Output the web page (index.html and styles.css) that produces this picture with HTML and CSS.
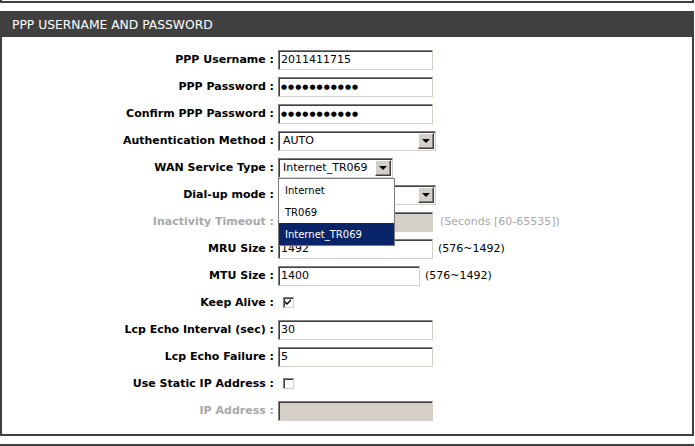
FILE: index.html
```html
<!DOCTYPE html>
<html lang="en">
<head>
<meta charset="UTF-8" />
<title>PPP Username and Password</title>
<link rel="stylesheet" href="styles.css">
</head>
<body>

<div class="prev-box"></div>

<div class="section">
  <h2 class="section-title">PPP USERNAME AND PASSWORD</h2>
  <div class="form">
    <div class="row">
      <div class="label">PPP Username :</div>
      <div class="field"><div class="input">2011411715</div></div>
    </div>
    <div class="row">
      <div class="label">PPP Password :</div>
      <div class="field"><div class="input dots">●●●●●●●●●●●</div></div>
    </div>
    <div class="row">
      <div class="label">Confirm PPP Password :</div>
      <div class="field"><div class="input dots">●●●●●●●●●●●</div></div>
    </div>
    <div class="row">
      <div class="label">Authentication Method :</div>
      <div class="field">
        <div class="select wide"><span class="select-text">AUTO</span><span class="arrow"></span></div>
      </div>
    </div>
    <div class="row">
      <div class="label">WAN Service Type :</div>
      <div class="field">
        <div class="select narrow">
          <span class="select-text">Internet_TR069</span><span class="arrow"></span>
          <!-- open option list -->
          <ul class="options">
            <li>Internet</li>
            <li>TR069</li>
            <li class="selected">Internet_TR069</li>
          </ul>
        </div>
      </div>
    </div>
    <div class="row">
      <div class="label">Dial-up mode :</div>
      <div class="field">
        <div class="select wide"><span class="select-text"></span><span class="arrow"></span></div>
      </div>
    </div>
    <div class="row">
      <div class="label off">Inactivity Timeout :</div>
      <div class="field">
        <div class="input disabled"></div>
        <span class="hint off seconds">(Seconds [60-65535])</span>
      </div>
    </div>
    <div class="row">
      <div class="label">MRU Size :</div>
      <div class="field">
        <div class="input">1492</div>
        <span class="hint">(576~1492)</span>
      </div>
    </div>
    <div class="row">
      <div class="label">MTU Size :</div>
      <div class="field">
        <div class="input short">1400</div>
        <span class="hint">(576~1492)</span>
      </div>
    </div>
    <div class="row">
      <div class="label">Keep Alive :</div>
      <div class="field">
        <span class="check">
          <svg width="7" height="7" viewBox="0 0 7 7"><path d="M0 2 L2 4 L6 0 L6 2 L2 6 L0 4 Z" fill="#000"/></svg>
        </span>
      </div>
    </div>
    <div class="row">
      <div class="label">Lcp Echo Interval (sec) :</div>
      <div class="field"><div class="input">30</div></div>
    </div>
    <div class="row">
      <div class="label">Lcp Echo Failure :</div>
      <div class="field"><div class="input">5</div></div>
    </div>
    <div class="row">
      <div class="label">Use Static IP Address :</div>
      <div class="field"><span class="check"></span></div>
    </div>
    <div class="row">
      <div class="label off">IP Address :</div>
      <div class="field"><div class="input disabled"></div></div>
    </div>
  </div>
</div>

<div class="next-bar"></div>

</body>
</html>
```

FILE: styles.css
```css
/* Base */
body {
  margin: 0;
  background: #fff;
  font-family: "DejaVu Sans", Verdana, sans-serif;
  font-size: 11px;
  color: #000;
  overflow: hidden;
}

/* Bottom edge of the box above */
.prev-box {
  width: 694px;
  height: 3px;
  box-sizing: border-box;
  border: 2px solid #404040;
  border-top: 0;
}

/* Section box */
.section {
  margin-top: 8px;
  width: 694px;
  box-sizing: border-box;
  border: 2px solid #404040;
  border-top: 0;
}
.section-title {
  margin: 0 -2px;
  height: 26px;
  padding-left: 12px;
  background: #404040;
  color: #fff;
  font-size: 12.3px;
  font-weight: normal;
  line-height: 28px;
}

.form {
  padding: 9px 0 10px;
}

/* Label / field rows */
.row {
  display: grid;
  grid-template-columns: 272px auto;
  column-gap: 4px;
  height: 27px;
  align-items: center;
}
.label {
  text-align: right;
  font-weight: bold;
  white-space: nowrap;
}
.off {
  color: #a8a8a8;
}
.field {
  display: flex;
  align-items: center;
  gap: 5px;
}

/* Sunken text boxes */
.input {
  box-sizing: border-box;
  width: 155px;
  height: 20px;
  padding: 0 2px;
  border: 1px solid;
  border-color: #808080 #d4d0c8 #d4d0c8 #808080;
  box-shadow: inset 1px 1px 0 #404040;
  background: #fff;
  line-height: 18px;
  white-space: nowrap;
}
.input.short { width: 142px; }
.input.disabled { background: #d4d0c8; }
.input.dots {
  font-size: 7px;
  letter-spacing: 1px;
  line-height: 19px;
}
.hint.seconds { margin-left: 2px; }

/* Drop-down selects */
.select {
  position: relative;
  box-sizing: border-box;
  height: 20px;
  display: flex;
  align-items: center;
  border: 1px solid;
  border-color: #808080 #d4d0c8 #d4d0c8 #808080;
  box-shadow: inset 1px 1px 0 #404040;
  background: #fff;
}
.select.wide { width: 158px; }
.select.narrow { width: 115px; }
.select-text {
  flex: 1;
  padding-left: 4px;
  white-space: nowrap;
}
.arrow {
  position: relative;
  width: 16px;
  height: 16px;
  margin: 1px 1px 0 0;
  box-sizing: border-box;
  background: #d4d0c8;
  border: 1px solid;
  border-color: #fff #404040 #404040 #fff;
  box-shadow: inset -1px -1px 0 #808080;
}
.arrow::after {
  content: "";
  position: absolute;
  left: 3px;
  top: 5px;
  border-left: 4px solid transparent;
  border-right: 4px solid transparent;
  border-top: 4px solid #000;
}

/* Open list of the WAN service select */
.options {
  position: absolute;
  top: 19px;
  left: -1px;
  width: 117px;
  margin: 0;
  padding: 0;
  list-style: none;
  box-sizing: border-box;
  border: 1px solid #7a7a7a;
  background: #fff;
  font-size: 10px;
  z-index: 5;
}
.options li {
  height: 22px;
  line-height: 24px;
  padding-left: 6px;
}
.options li.selected {
  background: #0a246a;
  color: #fff;
}

/* Checkboxes */
.check {
  display: flex;
  align-items: center;
  justify-content: center;
  width: 11px;
  height: 11px;
  margin-left: 5px;
  box-sizing: border-box;
  border: 1px solid;
  border-color: #808080 #d4d0c8 #d4d0c8 #808080;
  box-shadow: inset 1px 1px 0 #404040;
  background: #fff;
}

/* Top of the next section */
.next-bar {
  margin-top: 8px;
  width: 694px;
  height: 20px;
  background: #404040;
}
```
